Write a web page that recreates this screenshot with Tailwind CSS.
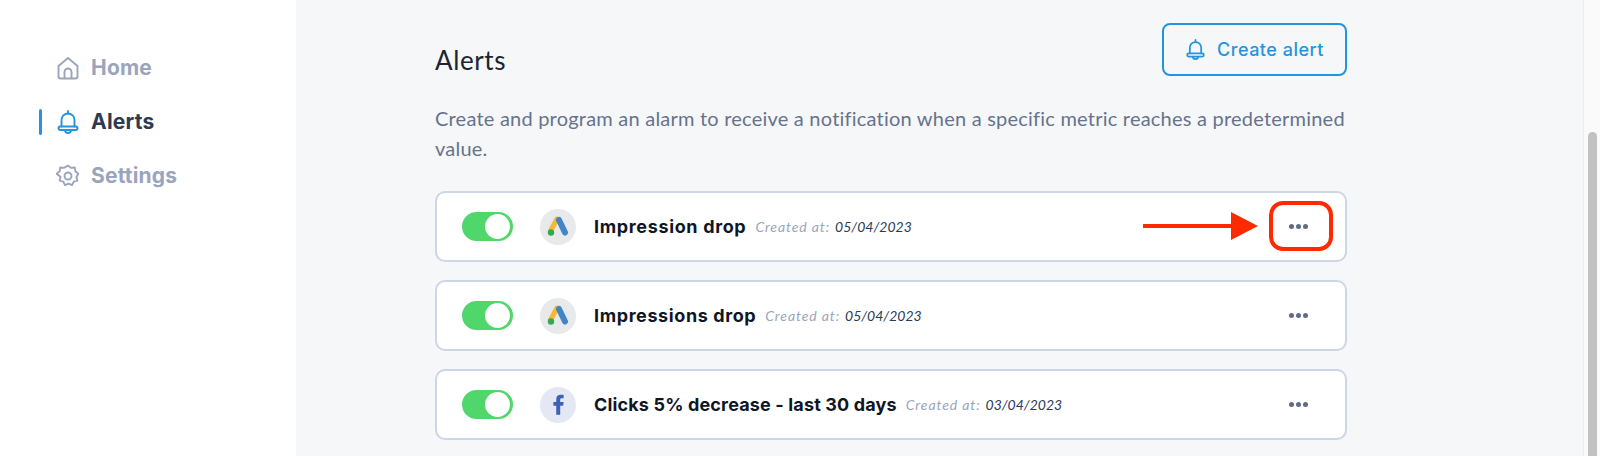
<!DOCTYPE html>
<html lang="en">

<head>
  <meta charset="UTF-8" />
  <title>Alerts</title>
  <script src="https://cdn.jsdelivr.net/npm/@tailwindcss/browser@4"></script>
  <meta name="viewport" content="width=device-width, initial-scale=1.0" />
</head>

<body class="h-[456px] overflow-hidden flex bg-[#f6f7f9] font-['Inter',sans-serif]">

  <!-- Sidebar -->
  <aside class="w-[296px] shrink-0 bg-white pt-[41px] flex flex-col">
    <a class="h-[54px] flex items-center pl-[56px] gap-[11px] text-[21px] tracking-[0.2px] font-bold text-[#9aa5bd]">
      <svg class="w-[24px] h-[24px]" viewBox="0 0 24 24" fill="none" stroke="currentColor" stroke-width="1.9" stroke-linejoin="round"><path d="M2.500 10 12 2l9.500 8v10.500a2 2 0 0 1-2 2h-15a2 2 0 0 1-2-2z" /><path d="M8.500 22.500V16a3.500 3.500 0 0 1 7 0v6.500" /></svg>
      Home
    </a>
    <a class="relative h-[54px] flex items-center pl-[56px] gap-[11px] text-[21px] tracking-[0.2px] font-bold text-[#2d3a52]">
      <span class="absolute left-[39px] top-[14px] w-[3px] h-[26px] rounded-full bg-[#2594dc]"></span>
      <svg class="w-[24px] h-[24px] text-[#2594dc]" viewBox="0 0 24 24" fill="none" stroke="currentColor" stroke-width="1.900" stroke-linejoin="round" stroke-linecap="round"><path d="M12 1v2.500" /><path d="M5.500 16.500V10a6.500 6.500 0 0 1 13 0v6.500" /><rect x="2.500" y="16.500" width="19" height="3.500" rx="1.700" /><path d="M9 20a3 3 0 0 0 6 0" /></svg>
      Alerts
    </a>
    <a class="h-[54px] flex items-center pl-[56px] gap-[11px] text-[21px] tracking-[0.2px] font-bold text-[#9aa5bd]">
      <svg class="w-[24px] h-[24px]" viewBox="0 0 24 24" fill="none" stroke="currentColor" stroke-width="1.900" stroke-linejoin="round"><path d="M12 1.500l3 2.400 3.800-.4.500 3.800 3 2.500-1.900 3.200 1 3.700-3.700 1-1.700 3.400-3.500-1.400-3.500 1.400-1.700-3.400-3.700-1 1-3.700L.700 9.800l3-2.500.5-3.800 3.800.4z" /><circle cx="12" cy="12" r="3.500" /></svg>
      Settings
    </a>
  </aside>

  <!-- Main -->
  <main class="flex-1 pl-[139px] pr-[236px]">
    <div class="pt-[23px] flex justify-between items-end">
      <h1 class="text-[26px] tracking-[0.6px] leading-[32px] text-[#1d2433] font-['Lato',sans-serif]">Alerts</h1>
      <button class="w-[185px] h-[53px] flex items-center justify-center gap-[11px] rounded-[8px] border-2 border-[#2594dc] text-[#2594dc] text-[18px] tracking-[0.5px] font-medium">
        <svg class="w-[21px] h-[21px]" viewBox="0 0 24 24" fill="none" stroke="currentColor" stroke-width="2" stroke-linejoin="round" stroke-linecap="round"><path d="M12 1v2.500" /><path d="M5.500 16.500V10a6.500 6.500 0 0 1 13 0v6.500" /><rect x="2.500" y="16.500" width="19" height="3.500" rx="1.700" /><path d="M9 20a3 3 0 0 0 6 0" /></svg>
        Create alert
      </button>
    </div>
    <p class="mt-[27px] text-[20px] tracking-[0.22px] leading-[30px] text-[#66738c] font-['Lato',sans-serif]">Create and program an alarm to receive a notification when a specific metric reaches a predetermined value.</p>

    <div class="mt-[28px] flex flex-col gap-[18px]">
      <!-- Impression drop -->
      <div class="relative h-[71px] bg-white rounded-[10px] border-2 border-[#cdd6e5] flex items-center pl-[25px] pr-[37px]">
        <span class="w-[51px] h-[29px] rounded-full bg-[#4fd76c] flex justify-end items-center pr-[3px]"><span class="w-[25px] h-[25px] rounded-full bg-white"></span></span>
        <span class="ml-[27px] w-[36px] h-[36px] rounded-full bg-[#e8e9eb] flex items-center justify-center">
          <svg class="w-[22px] h-[22px]" viewBox="0 0 22 22"><path d="M10 3 3.500 15" stroke="#f5b82e" stroke-width="5" stroke-linecap="round" /><path d="M12 4l6 12.500" stroke="#4384c4" stroke-width="6" stroke-linecap="round" /><circle cx="4" cy="16.500" r="3.200" fill="#34a853" /></svg>
        </span>
        <span class="ml-[18px] text-[18px] tracking-[0.65px] font-bold text-[#0f1626]">Impression drop</span>
        <span class="ml-[9px] text-[14px] tracking-[0.9px] italic text-[#9aa5bd] font-['Lato',sans-serif]">Created at:</span>
        <span class="ml-[5px] text-[14px] italic text-[#2d3a52] font-['Lato',sans-serif]">05/04/2023</span>
        <span class="ml-auto flex gap-[2px]"><i class="w-[5px] h-[5px] rounded-full bg-[#5f6c85]"></i><i class="w-[5px] h-[5px] rounded-full bg-[#5f6c85]"></i><i class="w-[5px] h-[5px] rounded-full bg-[#5f6c85]"></i></span>

        <!-- Annotation -->
        <svg class="absolute left-[706px] top-[19px] w-[115px] h-[28px]" viewBox="0 0 115 28"><path d="M0 12h88V0l27 14-27 14V16H0z" fill="#ff2a00" /></svg>
        <span class="absolute left-[832px] top-[8px] w-[64px] h-[50px] rounded-[14px] border-[4px] border-[#ff2a00]"></span>
      </div>

      <!-- Impressions drop -->
      <div class="h-[71px] bg-white rounded-[10px] border-2 border-[#cdd6e5] flex items-center pl-[25px] pr-[37px]">
        <span class="w-[51px] h-[29px] rounded-full bg-[#4fd76c] flex justify-end items-center pr-[3px]"><span class="w-[25px] h-[25px] rounded-full bg-white"></span></span>
        <span class="ml-[27px] w-[36px] h-[36px] rounded-full bg-[#e8e9eb] flex items-center justify-center">
          <svg class="w-[22px] h-[22px]" viewBox="0 0 22 22"><path d="M10 3 3.500 15" stroke="#f5b82e" stroke-width="5" stroke-linecap="round" /><path d="M12 4l6 12.500" stroke="#4384c4" stroke-width="6" stroke-linecap="round" /><circle cx="4" cy="16.500" r="3.200" fill="#34a853" /></svg>
        </span>
        <span class="ml-[18px] text-[18px] tracking-[0.6px] font-bold text-[#0f1626]">Impressions drop</span>
        <span class="ml-[9px] text-[14px] tracking-[0.9px] italic text-[#9aa5bd] font-['Lato',sans-serif]">Created at:</span>
        <span class="ml-[5px] text-[14px] italic text-[#2d3a52] font-['Lato',sans-serif]">05/04/2023</span>
        <span class="ml-auto flex gap-[2px]"><i class="w-[5px] h-[5px] rounded-full bg-[#5f6c85]"></i><i class="w-[5px] h-[5px] rounded-full bg-[#5f6c85]"></i><i class="w-[5px] h-[5px] rounded-full bg-[#5f6c85]"></i></span>
      </div>

      <!-- Clicks decrease -->
      <div class="h-[71px] bg-white rounded-[10px] border-2 border-[#cdd6e5] flex items-center pl-[25px] pr-[37px]">
        <span class="w-[51px] h-[29px] rounded-full bg-[#4fd76c] flex justify-end items-center pr-[3px]"><span class="w-[25px] h-[25px] rounded-full bg-white"></span></span>
        <span class="ml-[27px] w-[36px] h-[36px] rounded-full bg-[#e3e8f4] flex items-center justify-center">
          <svg class="w-[25px] h-[25px]" viewBox="0 0 22 22"><path d="M9 20v-8H6.500V8.800H9V6.500C9 3.800 10.500 2.500 13 2.500h2.500v3h-1.700c-1 0-1.300.5-1.300 1.300v2h3l-.4 3.200h-2.600v8z" fill="#3d62b3" /></svg>
        </span>
        <span class="ml-[18px] text-[18px] tracking-[0.15px] font-bold text-[#0f1626]">Clicks 5% decrease - last 30 days</span>
        <span class="ml-[9px] text-[14px] tracking-[0.9px] italic text-[#9aa5bd] font-['Lato',sans-serif]">Created at:</span>
        <span class="ml-[5px] text-[14px] italic text-[#2d3a52] font-['Lato',sans-serif]">03/04/2023</span>
        <span class="ml-auto flex gap-[2px]"><i class="w-[5px] h-[5px] rounded-full bg-[#5f6c85]"></i><i class="w-[5px] h-[5px] rounded-full bg-[#5f6c85]"></i><i class="w-[5px] h-[5px] rounded-full bg-[#5f6c85]"></i></span>
      </div>
    </div>
  </main>

  <!-- Scrollbar -->
  <div class="w-[17px] shrink-0 bg-[#fafafa] border-l border-[#ececec] pt-[132px] pl-[4px] pr-[3px]">
    <div class="h-full rounded-t-full bg-[#c1c1c1]"></div>
  </div>

</body>

</html>
